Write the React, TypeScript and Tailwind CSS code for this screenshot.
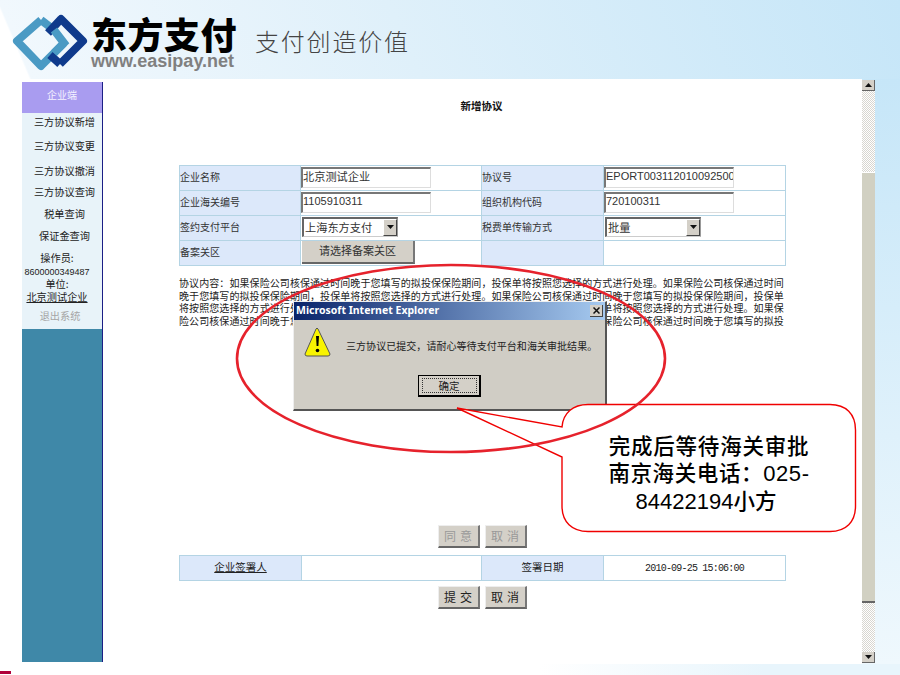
import React from "react";

const sans = "font-['Noto_Sans_CJK_SC','Liberation_Sans',sans-serif]";
const latin = "font-['Liberation_Sans',sans-serif]";

const labelCell = "flex items-center bg-[#dce8fa] border-r border-b border-[#b4d4e4] pb-[4px] text-[10px] text-[#333]";
const valueCell = "flex items-center bg-white border-r border-b border-[#b4d4e4] pb-[2px] text-[#333]";

const TextInput = ({ value, cn }: { value: string; cn?: boolean }) => (
  <div className={`flex items-center w-[130px] h-[21px] pb-[2px] bg-white overflow-hidden whitespace-nowrap border-l-2 border-t-2 border-r border-b border-l-[#777] border-t-[#777] border-r-[#ddd] border-b-[#ddd] text-[#333] ${cn ? "text-[11.200px]" : `text-[11px] ${latin}`}`}>
    {value}
  </div>
);

const SelectBox = ({ value }: { value: string }) => (
  <div className="flex items-center justify-between w-[96px] h-[20px] -mt-[1px] ml-[1px] bg-white border-l-2 border-t-2 border-r border-b border-l-[#666] border-t-[#666] border-r-[#999] border-b-[#ccc] pl-[1px] text-[11.200px] text-[#333]">
    <span>{value}</span>
    <span className="flex items-center justify-center w-[14px] h-full bg-[#d4d0c8] border-l border-t border-l-white border-t-white border-r border-b border-r-[#444] border-b-[#444]">
      <svg width="7" height="4" viewBox="0 0 7 4"><path d="M0 0h7L3.500 4z" fill="#111" /></svg>
    </span>
  </div>
);

const GreyButton = ({ text, muted }: { text: string; muted?: boolean }) => (
  <div className={`flex items-center justify-center w-[42px] h-[23px] pl-[3px] bg-[#d4d0c8] border-r-2 border-b-2 border-r-[#777] border-b-[#666] border-l border-t border-l-[#eee] border-t-[#eee] text-[12px] tracking-[4px] ${muted ? "text-[#999]" : "text-[#222]"}`}>
    {text}
  </div>
);

const sideLinks = [
  { text: "三方协议新增", cls: "" },
  { text: "三方协议变更", cls: "mt-[6px]" },
  { text: "三方协议撤消", cls: "mt-[7px]" },
  { text: "三方协议查询", cls: "mt-[3px]" },
  { text: "税单查询", cls: "mt-[4px]" },
  { text: "保证金查询", cls: "mt-[4px]" },
];

const Sidebar = () => (
  <aside className="flex flex-col w-[81px] h-[580px] mt-[3px] ml-[22px] border-r-[1.500px] border-[#1b1f86] bg-[#3f88a8] shrink-0">
    <div className="flex items-center justify-center h-[31px] pb-[6px] bg-[#a99cf0] text-[10px] text-[#f4f2ff]">企业端</div>
    <div className="flex flex-col items-center h-[216px] bg-[#e8f3f9] text-[10.200px] text-[#222]">
      {sideLinks.map((l) => (
        <div key={l.text} className={`h-[18px] leading-[18px] pl-[5px] whitespace-nowrap ${l.cls}`}>{l.text}</div>
      ))}
      <div className="mt-[6px] h-[14px] leading-[14px] pr-[10px]">操作员:</div>
      <div className={`mt-[1px] h-[12px] leading-[12px] pr-[10px] text-[9px] ${latin}`}>8600000349487</div>
      <div className="h-[12px] leading-[12px] pr-[10px]">单位:</div>
      <div className="h-[14px] leading-[14px] pr-[10px] underline">北京测试企业</div>
      <div className="mt-[5px] h-[14px] leading-[14px] pr-[4px] text-[#a5a5a5]">退出系统</div>
    </div>
  </aside>
);

const FormTable = () => (
  <div className="grid grid-cols-[121px_181px_122px_182px] grid-rows-[25px_25px_25px_25px] w-[607px] border-l border-t border-[#b4d4e4]">
    <div className={labelCell}>企业名称</div>
    <div className={valueCell}><TextInput value="北京测试企业" cn /></div>
    <div className={labelCell}>协议号</div>
    <div className={valueCell}><TextInput value="EPORT003112010092500023" /></div>

    <div className={labelCell}>企业海关编号</div>
    <div className={valueCell}><TextInput value="1105910311" /></div>
    <div className={labelCell}>组织机构代码</div>
    <div className={valueCell}><TextInput value="720100311" /></div>

    <div className={labelCell}>签约支付平台</div>
    <div className={valueCell}><SelectBox value="上海东方支付" /></div>
    <div className={labelCell}>税费单传输方式</div>
    <div className={valueCell}><SelectBox value="批量" /></div>

    <div className={labelCell}>备案关区</div>
    <div className="flex items-start bg-white border-r border-b border-[#b4d4e4]">
      <div className="flex items-center justify-center w-[113px] h-[23px] ml-[1px] pb-[3px] bg-[#d4d0c8] border-r-2 border-b-2 border-r-[#777] border-b-[#666] text-[11px] text-[#333]">请选择备案关区</div>
    </div>
    <div className={labelCell} />
    <div className={valueCell} />
  </div>
);

const terms = [
  "协议内容：如果保险公司核保通过时间晚于您填写的拟投保保险期间，投保单将按照您选择的方式进行处理。如果保险公司核保通过时间",
  "晚于您填写的拟投保保险期间，投保单将按照您选择的方式进行处理。如果保险公司核保通过时间晚于您填写的拟投保保险期间，投保单",
  "将按照您选择的方式进行处理。如果保险公司核保通过时间晚于您填写的拟投保保险期间，投保单将按照您选择的方式进行处理。如果保",
  "险公司核保通过时间晚于您填写的拟投保保险期间，投保单将按照您选择的方式进行处理。如果保险公司核保通过时间晚于您填写的拟投",
];

const SignTable = () => (
  <div className="grid grid-cols-[122px_180px_122px_181px] h-[26px] w-[607px] border border-[#b4d4e4] text-[10.500px] text-[#222]">
    <div className="flex items-center justify-center pb-[3px] bg-[#dce8fa] border-r border-[#b4d4e4] underline">企业签署人</div>
    <div className="bg-white border-r border-[#b4d4e4]" />
    <div className="flex items-center justify-center pb-[3px] bg-[#dce8fa] border-r border-[#b4d4e4]">签署日期</div>
    <div className="flex items-center justify-center bg-white text-[10px] tracking-[-0.800px] font-['Liberation_Mono',monospace]">2010-09-25 15:06:00</div>
  </div>
);

const Main = () => (
  <main className="flex flex-col flex-1 pl-[76px]">
    <h1 className="w-[607px] mt-[20px] h-[14px] leading-[14px] text-center text-[10.500px] font-bold text-[#111] pr-[2px]">新增协议</h1>
    <div className="mt-[52px]"><FormTable /></div>
    <div className="mt-[11px] text-[10px] leading-[12.500px] tracking-[0.080px] text-[#222] whitespace-nowrap">
      {terms.map((t) => <div key={t}>{t}</div>)}
    </div>
    <div className="flex justify-center gap-[5px] w-[607px] mt-[198px]">
      <GreyButton text="同意" muted />
      <GreyButton text="取消" muted />
    </div>
    <div className="mt-[7px]"><SignTable /></div>
    <div className="flex justify-center gap-[5px] w-[607px] mt-[5px]">
      <GreyButton text="提交" />
      <GreyButton text="取消" />
    </div>
  </main>
);

const ScrollArrow = ({ up }: { up?: boolean }) => (
  <div className="flex items-center justify-center h-[11px] bg-[#d4d0c8] border-b border-r border-[#666] shrink-0">
    <svg width="7" height="4" viewBox="0 0 7 4" className={up ? "rotate-180" : ""}><path d="M0 0h7L3.500 4z" fill="#111" /></svg>
  </div>
);

const Scrollbar = () => (
  <div className="flex flex-col w-[13px] h-[583px] mt-[1px] shrink-0">
    <ScrollArrow up />
    <div className="h-[81px] bg-[repeating-conic-gradient(#d8d6d0_0_25%,#ffffff_0_50%)] bg-[length:2px_2px]" />
    <div className="h-[431px] bg-[#d1d0c2] border-t border-white border-b-2 border-b-[#666]" />
    <div className="flex-1 bg-[repeating-conic-gradient(#d8d6d0_0_25%,#ffffff_0_50%)] bg-[length:2px_2px]" />
    <ScrollArrow />
  </div>
);

const Logo = () => (
  <svg width="90" height="62" viewBox="0 0 90 62" className="shrink-0">
    <path d="M31 6 L7 27 L31 52 L54 29" fill="none" stroke="#4a9ac4" strokeWidth="8" strokeLinejoin="round" />
    <path d="M31 6 L44 16" fill="none" stroke="#4a9ac4" strokeWidth="8" />
    <path d="M50 50 L73 27 L51 5 L38 19" fill="none" stroke="#0f3a8c" strokeWidth="8" strokeLinejoin="round" />
    <path d="M50 50 L40 41" fill="none" stroke="#0f3a8c" strokeWidth="8" />
    <path d="M44 16 L54 29 L44 39" fill="none" stroke="#4a9ac4" strokeWidth="8" />
  </svg>
);

const Header = () => (
  <header className="flex items-start h-[79px] pl-[10px] pt-[14px] bg-[linear-gradient(67deg,#ffffff_27px,#f1f8fd_29px,#dff0fa_45%,#c6e6f8_100%)]">
    <Logo />
    <div className="flex flex-col w-[150px] -ml-[9px] shrink-0">
      <div className="h-[38px] leading-[38px] text-[36px] tracking-[0.500px] font-black text-black whitespace-nowrap">东方支付</div>
      <div className={`h-[18px] leading-[18px] text-[18px] font-bold text-[#808080] whitespace-nowrap ${latin}`}>www.easipay.net</div>
    </div>
    <div className="ml-[14px] mt-[11px] text-[24px] leading-[32px] tracking-[1.800px] font-light text-[#444] whitespace-nowrap">支付创造价值</div>
  </header>
);

const Dialog = () => (
  <div className="absolute left-[293px] top-[301px] flex flex-col w-[314px] h-[110px] bg-[#d0cdc5] border-r-2 border-b-2 border-r-[#555] border-b-[#555] border-l border-t border-l-[#eee] border-t-[#eee]">
    <div className="flex items-center justify-between h-[18px] px-[2px] bg-[linear-gradient(to_right,#0a246a,#a6caf0)]">
      <span className="text-[10.500px] font-bold text-white font-['Noto_Sans',sans-serif]">Microsoft Internet Explorer</span>
      <span className="flex items-center justify-center w-[13px] h-[12px] bg-[#d4d0c8] border-r border-b border-[#444]">
        <svg width="7" height="7" viewBox="0 0 7 7"><path d="M0.500 0.500L6.500 6.500M6.500 0.500L0.500 6.500" stroke="#111" strokeWidth="1.500" /></svg>
      </span>
    </div>
    <div className="flex items-center gap-[15px] pl-[10px] mt-[7px]">
      <svg width="27" height="31" viewBox="0 0 27 31" className="shrink-0">
        <path d="M14 2 L26 27 Q26 29 24 29 L3 29 Q1 29 1 27 L12 2 Q13 0 14 2z" fill="#f8f400" stroke="#555" strokeWidth="1" />
        <path d="M12 9h3l-.6 10h-1.800z" fill="#000" />
        <circle cx="13.500" cy="23.500" r="1.800" fill="#000" />
      </svg>
      <span className="pt-[6px] text-[10px] tracking-[0.050px] text-[#222] whitespace-nowrap">三方协议已提交，请耐心等待支付平台和海关审批结果。</span>
    </div>
    <div className="flex justify-center mt-[17px]">
      <div className="flex items-center justify-center w-[63px] h-[22px] border border-black border-r-2 border-b-2 bg-[#d4d0c8]">
        <div className="flex items-center justify-center w-[55px] h-[15px] border border-dotted border-[#333] text-[10.500px] text-[#222]">确定</div>
      </div>
    </div>
  </div>
);

const Annotation = () => (
  <>
    <svg width="900" height="675" viewBox="0 0 900 675" className="absolute left-0 top-0 pointer-events-none">
      <path
        d="M562 427 C563 413 573 404.500 588 404.500 L830 404.500 C846 404.500 855.500 414 855.500 430 L855.500 506 C855.500 522 846 531.500 830 531.500 L588 531.500 C572 531.500 562 522 562 506 L562 457 L457 408 Z"
        fill="#fff"
        stroke="#f00000"
        strokeWidth="1.400"
      />
      <ellipse cx="451" cy="358.500" rx="214" ry="93.500" fill="none" stroke="#e6222c" strokeWidth="2.600" />
    </svg>
    <div className="absolute left-[562px] top-[432px] w-[294px] flex flex-col items-center text-[21.500px] leading-[26.500px] font-medium text-black whitespace-nowrap">
      <div className="tracking-[0.800px]">完成后等待海关审批</div>
      <div className="tracking-[0.600px]">南京海关电话：<span className={`${latin} font-normal text-[22px]`}>025-</span></div>
      <div className="-ml-[6px]"><span className={`${latin} font-normal text-[22px]`}>84422194</span>小方</div>
    </div>
  </>
);

const App: React.FC = () => {
  return (
    <div className={`relative flex flex-col w-[900px] h-[675px] overflow-hidden bg-white ${sans}`}>
      <Header />
      <div className="flex h-[585px] bg-[linear-gradient(to_bottom,#c6e6f8,#eff8fd)]">
        <div className="flex w-[862px] bg-white shrink-0">
          <Sidebar />
          <Main />
        </div>
        <Scrollbar />
      </div>
      <div className="relative flex-1 bg-[linear-gradient(to_right,#ffffff_60%,#e8f5fc_85%)]">
        <div className="absolute left-0 bottom-[1px] w-[11px] h-[3px] bg-[#b0003a]" />
      </div>
      <Dialog />
      <Annotation />
    </div>
  );
};

export default App;
